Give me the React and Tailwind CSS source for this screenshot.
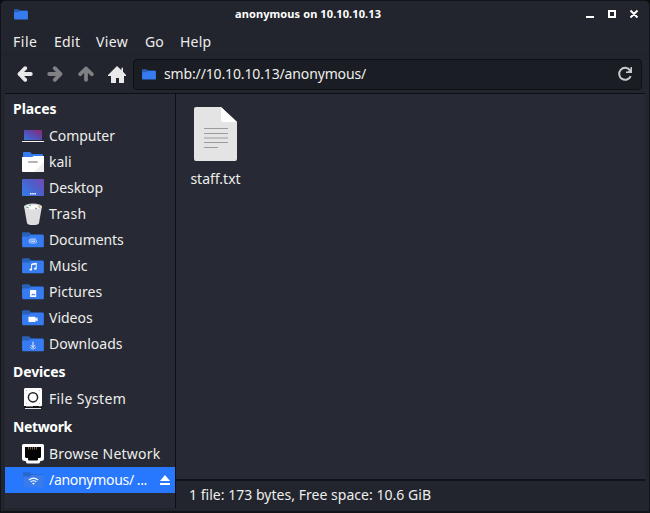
import React from 'react';

function Folder({ children, muted = false, className = 'w-[22px] h-4' }) {
  return (
    <svg viewBox="0 0 22 16" preserveAspectRatio="none" className={`shrink-0 ${className}`}>
      <path d="M0 1.5Q0 .3 1.2.3H7l2 1.9h11.5q1 0 1 1V13H0z" fill={muted ? '#2867cb' : '#2860b8'} />
      <path d="M.2 4.6h6.3L8.8 3H21q.8 0 .8.8v10.7q0 .8-.8.8H1q-.8 0-.8-.8z" fill={muted ? '#3a7bec' : '#367bf0'} />
      {children}
    </svg>
  );
}

const Computer = () => (
  <svg viewBox="0 0 22 22" className="w-[22px] h-[22px]">
    <defs><linearGradient id="computer" x1="0" y1="1" x2="1" y2="0"><stop stopColor="#3974df" /><stop offset=".5" stopColor="#584bb0" /><stop offset="1" stopColor="#8d2871" /></linearGradient></defs>
    <path d="M2 5h18v10H2z" fill="url(#computer)" /><path d="M0 16h22v1H0z" fill="#f4f4f4" />
  </svg>
);
const Home = () => (
  <svg viewBox="0 0 22 22" className="w-[22px] h-[22px]">
    <path d="M1 2q0-1 1-1h6l2 2h10q1 0 1 1v5H1z" fill="#367bf0" />
    <path d="M0 6h10l2-1h10v15q0 1-1 1H1q-1 0-1-1z" fill="#fff" /><path d="M22 11v9q0 1-1 1h-9z" fill="#eee" />
    <rect x="6" y="10" width="10" height="2" rx="1" fill="#b3b3b3" />
  </svg>
);
const Desktop = () => (
  <svg viewBox="0 0 22 22" className="w-[22px] h-[22px]">
    <defs><linearGradient id="desktop" x1="0" y1=".8" x2="1" y2="0"><stop stopColor="#3978e6" /><stop offset=".5" stopColor="#4c60cb" /><stop offset="1" stopColor="#7648b0" /></linearGradient></defs>
    <rect y="2" width="22" height="17" rx="1" fill="url(#desktop)" />
    <path d="M8 16h1.5v1.5H8zm2.2 0h1.5v1.5h-1.5zm2.3 0H14v1.5h-1.5z" fill="#fff" />
  </svg>
);
const Trash = () => (
  <svg viewBox="0 0 22 22" className="w-[22px] h-[22px]">
    <path d="M2 3h18l-3 17q-.4 2-6 2t-6-2z" fill="#dedede" />
    <ellipse cx="11" cy="3.7" rx="9" ry="3.2" fill="#d6d6d6" /><ellipse cx="11" cy="4.3" rx="7.7" ry="2.5" fill="#fafafa" />
    <path d="M4 4l3 1M7 2l2 1" stroke="#68a788" /><path d="M16 3l2 1-1 1" stroke="#d5b660" fill="none" /><path d="M13 5l2 1" stroke="#6c7e9c" />
  </svg>
);
const Drive = () => (
  <svg viewBox="0 0 22 22" className="w-[22px] h-[22px]">
    <path d="M3 0h16l1 1v17H2V1z" fill="#fff" /><path d="M2 18h18v2H2z" fill="#111" /><path d="M3 20h16v1H3z" fill="#e5e5e5" />
    <path d="M4 18.5h7M17 18.5h2" stroke="#777" /><circle cx="11" cy="9.3" r="4.6" fill="none" stroke="#20242c" strokeWidth="1.5" />
    <path d="M4 2h.8v.8H4zm13.2 0h.8v.8h-.8zM4 15h.8v.8H4zm13.2 0h.8v.8h-.8z" fill="#888" />
  </svg>
);
const Ethernet = () => (
  <svg viewBox="0 0 22 22" className="w-[22px] h-[22px]">
    <path d="M1.5 1h19Q22 1 22 2.5v13q0 2.5-3 2.5-1 0-1 1 0 1.5-2 1.5H6q-2 0-2-1.5 0-1-1-1-3 0-3-2.5v-13Q0 1 1.5 1z" fill="#fff" />
    <path d="M3 4h16v9.5q0 1.5-1.5 1.5H16v1.5q0 1-1 1H7q-1 0-1-1V15H4.5Q3 15 3 13.5z" fill="#030303" />
    <path d="M6.5 4v2.5M8.5 4v2.5M10.5 4v2.5M12.5 4v2.5M14.5 4v2.5" stroke="#725e3c" />
  </svg>
);
const Clip = () => <Folder><path d="M14 7H9.1a2 2 0 0 0 0 4h3.7a1.7 1.7 0 0 0 1.7-1.9q0-1-1.3-1H9.4q-.8 0-.8.8t.8.6H13" fill="none" stroke="#c6dbff" strokeWidth=".9" /></Folder>;
const Music = () => <Folder><path d="M9.6 11.3V6.4l4.6-1v5.1" fill="none" stroke="#fff" strokeWidth="1" /><path d="M9.5 5.8l5-1v1.5l-5 1z" fill="#fff" /><ellipse cx="8.8" cy="11.6" rx="1.4" ry="1.1" fill="#fff" /><ellipse cx="13.3" cy="10.7" rx="1.4" ry="1.1" fill="#fff" /></Folder>;
const Pictures = () => <Folder><rect x="8" y="6" width="6.2" height="7" rx=".5" fill="#fff" /><path d="M9 11.2l1.6-1.7.9.7 1-.7 1 1.7z" fill="#4986e8" /></Folder>;
const Videos = () => <Folder><rect x="6.5" y="6.7" width="7" height="5.3" rx=".6" fill="#fff" /><path d="M13 9l2.5-1.7v4.2L13 10z" fill="#fff" /></Folder>;
const Downloads = () => <Folder><path d="M11 5.7v6M8.9 9.2l2.1 2.2 2.1-2.2" fill="none" stroke="#eaf2ff" strokeWidth="1" /><path d="M8.2 11q.4 2 2.8 2t2.8-2" fill="none" stroke="#b4cff9" /></Folder>;
const Share = () => <Folder muted className="h-4 w-[21px]"><path d="M6.2 8q4.8-3.7 9.6 0M8 9.9q3-2.4 6 0" fill="none" stroke="#fff" strokeWidth="1.1" /><path d="M9.5 11.2q1.5-1.1 3 0L11 12.7z" fill="#fff" /></Folder>;

const places = [
  [Computer, 'Computer', 'tracking-[-0.06px]'], [Home, 'kali', ''], [Desktop, 'Desktop', 'tracking-[-0.06px]'], [Trash, 'Trash', 'tracking-[0.35px]'],
  [Clip, 'Documents', 'tracking-[-0.1px]'], [Music, 'Music', 'tracking-[0.05px]'], [Pictures, 'Pictures', 'tracking-[0.1px]'], [Videos, 'Videos', ''], [Downloads, 'Downloads', 'tracking-[0.03px]'],
];

function Row({ icon: Icon, label, tracking = '' }) {
  return <div className="flex h-[26px] items-center pl-[17px]"><span className="flex w-[22px] justify-center"><Icon /></span><span className={`ml-[5px] whitespace-nowrap ${tracking}`}>{label}</span></div>;
}
const Heading = ({ children, className }) => <div className={`flex h-[29px] items-center pl-2 font-bold text-white ${className}`}>{children}</div>;
const Arrow = ({ className }) => <svg viewBox="0 0 16 16" className={`h-4 w-4 shrink-0 ${className}`} fill="none" stroke="currentColor" strokeLinecap="round" strokeLinejoin="round"><path d="M8.2 2.2 2.5 8l5.7 5.8" strokeWidth="3.8" /><path d="M3 8h10.8" strokeWidth="3.8" /></svg>;

export default function App() {
  return (
    <div className="h-[513px] w-[650px] bg-[#090a0d] font-['Noto_Sans',sans-serif] text-[14px] leading-5 text-[#eeeeec]">
      <div className="flex h-full flex-col overflow-hidden rounded-t-[5px] border border-[#111318] border-b-[2px] bg-[#23252e]">
        <header className="flex h-[26px] shrink-0 items-center">
          <div className="w-[234px] pl-[13px]"><Folder className="h-[11px] w-[14px]" /></div>
          <div className="flex-1 text-[11px] font-bold text-white"><span className="whitespace-nowrap tracking-[0.1px]">anonymous on 10.10.10.13</span></div>
          <div className="flex w-[216px] justify-end pr-[10px]">
            <svg viewBox="0 0 54 10" className="h-[10px] w-[54px]" fill="none" stroke="#fff" strokeWidth="2"><path d="M1 8h8M24 2h6v6h-6zM45.5 1.5l7 7M52.5 1.5l-7 7" /></svg>
          </div>
        </header>
        <nav className="flex h-7 shrink-0 items-center border-b border-[#20222a] pl-3 pt-0.5">
          <span className="w-[41px] tracking-[0.5px]">File</span><span className="w-[42px] tracking-[0.3px]">Edit</span><span className="w-[49px] tracking-[0.35px]">View</span><span className="w-[35px]">Go</span><span className="tracking-[0.2px]">Help</span>
        </nav>
        <div className="flex h-[38px] shrink-0 items-center pl-4 pr-[7px]">
          <Arrow className="text-[#e9e9e9]" /><Arrow className="ml-[14px] rotate-180 text-[#7e8084]" /><Arrow className="ml-[15px] rotate-90 text-[#7e8084]" />
          <svg viewBox="0 0 18 17" className="ml-[14px] h-[17px] w-[18px] shrink-0 fill-[#e9e9e9]"><path d="M9 0l4.5 4.3V1.8H15v4L18 9v1h-2v7h-5v-5H8v5H3v-7H0V9z" /></svg>
          <div className="ml-[7px] flex h-[31px] flex-1 items-center rounded-[4px] border border-[#0e1014] bg-[#1a1d23] pl-2 pr-2">
            <Folder className="h-[11px] w-[14px]" /><span className="ml-2 tracking-[-0.14px]">smb://10.10.10.13/anonymous/</span>
            <svg viewBox="0 0 16 16" className="ml-auto h-4 w-4"><path d="M13.7 10.1A6 6 0 1 1 12.8 4" fill="none" stroke="#c9cacc" strokeWidth="2" /><path d="M15 1v6H9V5.5h2L13.5 3V1z" fill="#c9cacc" /></svg>
          </div>
        </div>
        <main className="mx-1 flex h-[415px] shrink-0 border-t border-[#0c0e12]">
          <aside className="w-[171px] shrink-0 border-r border-[#0c0e12] bg-[#272a34]">
            <Heading className="tracking-[-0.05px]">Places</Heading>
            {places.map(([icon, label, tracking]) => <Row key={label} icon={icon} label={label} tracking={tracking} />)}
            <Heading className="tracking-[-0.1px]">Devices</Heading>
            <Row icon={Drive} label="File System" tracking="tracking-[0.32px]" />
            <Heading className="tracking-[-0.38px]">Network</Heading>
            <Row icon={Ethernet} label="Browse Network" tracking="tracking-[0.22px]" />
            <div className="flex h-[26px] items-center bg-[#2777ff] pl-[18px] text-white"><Share /><span className="ml-[5px] tracking-[-0.3px]">/anonymous/</span><span className="ml-[3px] tracking-[-0.4px]">...</span><svg viewBox="0 0 10 10" className="ml-auto mr-[5px] h-[10px] w-[10px] shrink-0 fill-white"><path d="M5 0l5 6H0zM0 8h10v2H0z" /></svg></div>
          </aside>
          <section className="flex flex-1 flex-col">
            <div className="h-[385px] bg-[#272a34] pl-[13px] pt-[13px]">
              <div className="flex w-[53px] flex-col items-center">
                <svg viewBox="0 0 43 54" className="h-[54px] w-[43px]"><path d="M2 0h25l16 15v37q0 2-2 2H2q-2 0-2-2V2q0-2 2-2z" fill="#e4e4e4" /><path d="M27 0l16 15H29q-2 0-2-2z" fill="#fff" /><path d="M10 21.5h24M10 26.5h24M10 31h24M10 35.5h24M10 40.5h14" stroke="#999b9d" strokeWidth="1.2" /></svg>
                <span className="mt-2 whitespace-nowrap">staff.txt</span>
              </div>
            </div>
            <div className="flex flex-1 items-center border-t-2 border-[#101217] pl-[13px]"><span className="tracking-[0.03px]">1 file: 173 bytes, Free space: 10.6 GiB</span></div>
          </section>
        </main>
      </div>
    </div>
  );
}
